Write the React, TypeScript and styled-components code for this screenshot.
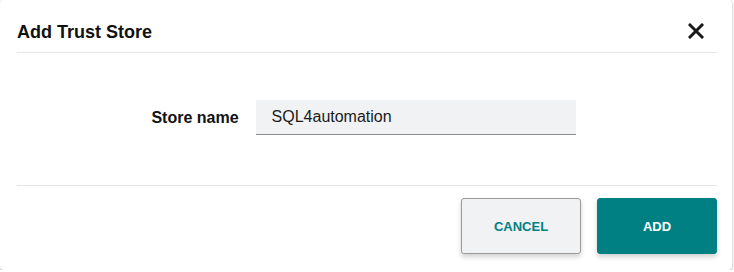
import React from "react";
import styled, { createGlobalStyle } from "styled-components";

const GlobalStyle = createGlobalStyle`
  html, body {
    margin: 0;
    padding: 0;
    background: #ffffff;
  }
  body {
    font-family: "Liberation Sans", Arial, sans-serif;
    color: #1a1a1a;
  }
`;

const Dialog = styled.div`
  box-sizing: border-box;
  width: 732px;
  height: 270px;
  background: #ffffff;
  border-radius: 4px;
  box-shadow: 0 1px 3px rgba(0, 0, 0, 0.35);
  padding: 0 15px 0 17px;
  display: flex;
  flex-direction: column;
`;

const Header = styled.div`
  box-sizing: border-box;
  height: 53px;
  padding-top: 22px;
  border-bottom: 1px solid #e3e5e8;
  display: flex;
  align-items: flex-start;
  justify-content: space-between;
`;

const Title = styled.h2`
  margin: 0;
  font-size: 18px;
  line-height: 21px;
  font-weight: 700;
  color: #111;
`;

const CloseButton = styled.button`
  border: none;
  background: transparent;
  padding: 0;
  margin: 1px 13px 0 0;
  width: 16px;
  height: 16px;
  cursor: pointer;
  display: flex;
`;

const Body = styled.div`
  box-sizing: border-box;
  height: 133px;
  padding-top: 47px;
  border-bottom: 1px solid #e3e5e8;
  display: flex;
  justify-content: center;
  align-items: flex-start;
`;

const FieldRow = styled.div`
  display: flex;
  align-items: center;
  gap: 17px;
  margin-left: -7px;
`;

const Label = styled.label`
  font-size: 16px;
  font-weight: 700;
  color: #111;
`;

const Input = styled.input`
  box-sizing: border-box;
  width: 320px;
  height: 35px;
  border: none;
  border-bottom: 1px solid #8c8c8c;
  background: #f1f2f4;
  padding: 0 16px;
  font-family: "Liberation Sans", Arial, sans-serif;
  font-size: 16px;
  color: #1a1a1a;
  outline: none;
`;

const Footer = styled.div`
  display: flex;
  justify-content: flex-end;
  gap: 16px;
  padding-top: 12px;
`;

const Button = styled.button<{ $primary?: boolean }>`
  box-sizing: border-box;
  width: 120px;
  height: 56px;
  border-radius: 3px;
  font-family: "Liberation Sans", Arial, sans-serif;
  font-size: 13px;
  font-weight: 700;
  cursor: pointer;
  border: 1px solid ${(p) => (p.$primary ? "#008083" : "#9a9a9a")};
  background: ${(p) => (p.$primary ? "#008083" : "#f1f2f4")};
  color: ${(p) => (p.$primary ? "#ffffff" : "#008083")};
  box-shadow: 0 3px 5px rgba(0, 0, 0, 0.18);
`;

export default function App() {
  return (
    <>
      <GlobalStyle />
      <Dialog>
        <Header>
          <Title>Add Trust Store</Title>
          <CloseButton aria-label="Close">
            <svg width="16" height="16" viewBox="0 0 16 16">
              <path
                d="M2 2 L14 14 M14 2 L2 14"
                stroke="#1a1a1a"
                strokeWidth="3"
                strokeLinecap="square"
              />
            </svg>
          </CloseButton>
        </Header>
        <Body>
          <FieldRow>
            <Label htmlFor="store">Store name</Label>
            <Input id="store" defaultValue="SQL4automation" />
          </FieldRow>
        </Body>
        <Footer>
          <Button>CANCEL</Button>
          <Button $primary>ADD</Button>
        </Footer>
      </Dialog>
    </>
  );
}
